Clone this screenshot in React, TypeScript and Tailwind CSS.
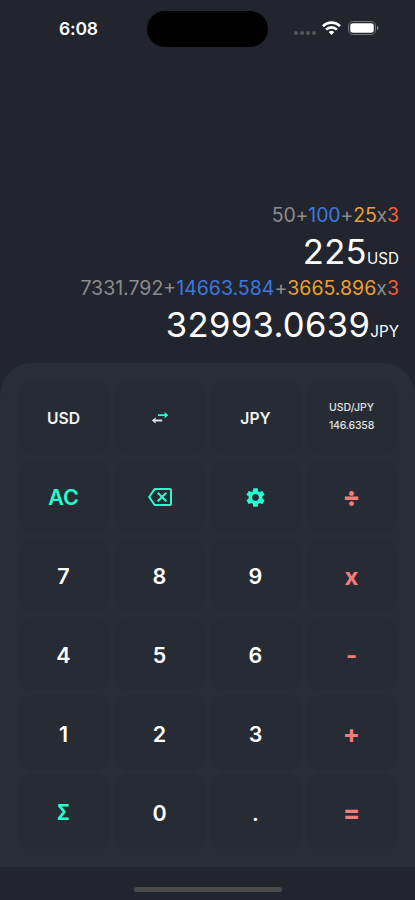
import { MdOutlineBackspace, MdSettings } from "react-icons/md";
import type { ReactNode } from "react";

function StatusBar() {
  return (
    <header className="flex h-[58px] shrink-0 items-center pl-[59px]">
      <span className="w-[88px] shrink-0 text-[17.5px] font-semibold tracking-[-0.15px]">6:08</span>
      <span className="h-9 w-[121px] shrink-0 rounded-full bg-black" />
      <span className="mt-2 ml-[26px] flex gap-[2px]">
        {[0, 1, 2, 3].map((i) => (
          <i key={i} className="size-1 rounded-full bg-[#54565c]" />
        ))}
      </span>
      <svg className="mb-[2px] ml-[6px] shrink-0" width="19" height="14" viewBox="0 0 19 14" fill="none" stroke="#fff" strokeWidth="2.7">
        <path d="M1 5.2a12 12 0 0 1 17 0M4.1 8.6a7.8 7.8 0 0 1 10.8 0" />
        <path d="M9.5 13.9 6.7 11.1a4.1 4.1 0 0 1 5.6 0Z" fill="#fff" stroke="none" />
      </svg>
      <svg className="mb-[2px] ml-[7px] shrink-0" width="31" height="14" viewBox="0 0 31 14">
        <rect x=".5" y=".5" width="27" height="13" rx="4.2" fill="none" stroke="#74767b" />
        <rect x="2.2" y="2.2" width="23.6" height="9.6" rx="2.7" fill="#fff" />
        <path d="M29 4.8c2 .7 2 3.7 0 4.4Z" fill="#85878b" />
      </svg>
    </header>
  );
}

function Expression({ values, tracking = "" }: { values: [string, string, string, string]; tracking?: string }) {
  return (
    <div className={`flex h-[27px] items-center text-[19.5px] font-normal whitespace-pre ${tracking}`}>
      <span className="text-[#8c8c8e]">{values[0]}+</span>
      <span className="text-[#3c78e0]">{values[1]}</span>
      <span className="text-[#8c8c8e]">+</span>
      <span className="text-[#eb9e35]">{values[2]}</span>
      <span className="text-[#8c8c8e]">x</span>
      <span className="text-[#ee603a]">{values[3]}</span>
    </div>
  );
}

function Result({ amount, currency }: { amount: string; currency: string }) {
  return (
    <div className="flex h-[46px] items-baseline leading-[44px]">
      <span className="text-[34.6px] tracking-[0.35px]">{amount}</span>
      <span className="text-[15.2px]">{currency}</span>
    </div>
  );
}

function SwapIcon() {
  return (
    <svg width="18" height="14" viewBox="0 0 18 14">
      <path d="M7 3.2h6.6V1.1L17.4 4.2 13.6 7.3V5.1H7Z" fill="#26fed1" />
      <path d="M11.2 8.6H4.6V6.4L.8 9.5l3.8 3.1v-2.2h6.6Z" fill="#dedfe0" />
    </svg>
  );
}

const keys: { id: string; face: ReactNode; style: string }[] = [
  { id: "from", face: "USD", style: "pt-[2px] text-[15.7px] font-semibold text-[#f2f2f2]" },
  { id: "swap", face: <SwapIcon />, style: "pt-[2px]" },
  { id: "to", face: "JPY", style: "pt-[2px] text-[15.7px] font-semibold text-[#f2f2f2]" },
  {
    id: "rate",
    face: (
      <span className="flex flex-col items-center text-[10.5px] leading-[18.5px] font-medium">
        <span>USD/JPY</span>
        <span className="tracking-[-0.2px]">146.6358</span>
      </span>
    ),
    style: "text-[#e2e2e4]",
  },
  { id: "clear", face: "AC", style: "pt-[2px] text-[21.5px] font-semibold text-[#26fed1]" },
  { id: "delete", face: <MdOutlineBackspace size={24} />, style: "pt-[2px] text-[#26fed1]" },
  { id: "settings", face: <MdSettings size={23} />, style: "pt-[2px] text-[#26fed1]" },
  { id: "divide", face: "÷", style: "pt-[1px] text-[26px] text-[#f57b7b] font-extrabold" },
  { id: "7", face: "7", style: "pt-[2px] text-[21.5px] font-semibold" },
  { id: "8", face: "8", style: "pt-[2px] text-[21.5px] font-semibold" },
  { id: "9", face: "9", style: "pt-[2px] text-[21.5px] font-semibold" },
  { id: "multiply", face: "x", style: "pt-[3px] text-[24px] text-[#f57b7b] font-bold" },
  { id: "4", face: "4", style: "pt-[2px] text-[21.5px] font-semibold" },
  { id: "5", face: "5", style: "pt-[2px] text-[21.5px] font-semibold" },
  { id: "6", face: "6", style: "pt-[2px] text-[21.5px] font-semibold" },
  { id: "subtract", face: "-", style: "pt-[4px] text-[24px] text-[#f57b7b] font-bold" },
  { id: "1", face: "1", style: "pt-[2px] text-[21.5px] font-semibold" },
  { id: "2", face: "2", style: "pt-[2px] text-[21.5px] font-semibold" },
  { id: "3", face: "3", style: "pt-[2px] text-[21.5px] font-semibold" },
  { id: "add", face: "+", style: "pt-[3px] text-[25.5px] text-[#f57b7b] font-bold" },
  { id: "sum", face: <span className="scale-x-[0.87]">Σ</span>, style: "pt-[3px] text-[21px] font-bold text-[#26fed1]" },
  { id: "0", face: "0", style: "pt-[3px] text-[21.5px] font-semibold" },
  { id: "point", face: ".", style: "pt-[3px] text-[21.5px] font-semibold" },
  { id: "equals", face: "=", style: "pt-[2px] text-[26px] text-[#f57b7b] font-bold" },
];

export default function App() {
  return (
    <main className="flex h-[900px] w-[415px] flex-col overflow-hidden bg-[#22252d] font-['Inter','Liberation_Sans',sans-serif] text-white">
      <StatusBar />
      <section className="flex h-[305px] shrink-0 flex-col items-end justify-end pr-[16px] pb-[15px]">
        <Expression values={["50", "100", "25", "3"]} tracking="tracking-[-0.16px]" />
        <Result amount="225" currency="USD" />
        <Expression values={["7331.792", "14663.584", "3665.896", "3"]} />
        <Result amount="32993.0639" currency="JPY" />
      </section>
      <section className="grid h-[504px] shrink-0 grid-cols-4 grid-rows-6 gap-1 rounded-t-[32px] bg-[#292d36] pt-[17px] pr-[17.5px] pb-[18px] pl-[17.5px]">
        {keys.map((k) => (
          <button key={k.id} className={`flex min-h-0 items-center justify-center rounded-[16px] bg-[#272b33] ${k.style}`}>
            {k.face}
          </button>
        ))}
      </section>
      <footer className="flex h-[33px] justify-center pt-5">
        <div className="h-[5px] w-[148px] rounded-full bg-[#4b4b4b]" />
      </footer>
    </main>
  );
}
